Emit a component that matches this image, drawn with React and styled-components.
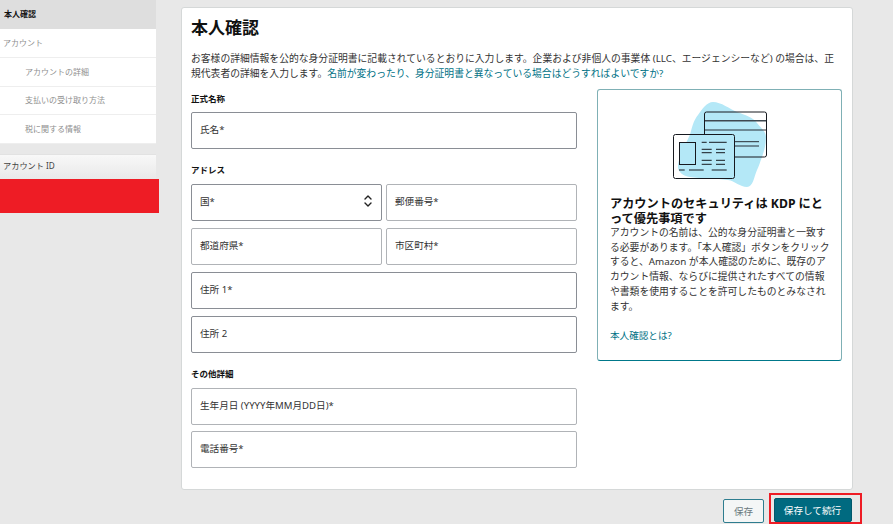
import React from "react";
import styled, { createGlobalStyle } from "styled-components";

const Global = createGlobalStyle`
  html, body { margin: 0; padding: 0; background: #e8e8e8; }
  body { font-family: "Noto Sans", "Noto Sans CJK JP", sans-serif; color: #16191f; overflow: hidden; }
  * { box-sizing: border-box; }
`;

const Page = styled.div`
  display: flex;
  width: 893px;
  height: 524px;
  overflow: hidden;
`;
const Sidebar = styled.aside`
  width: 159px;
  flex: none;
  display: flex;
  flex-direction: column;
`;
const NavHead = styled.div`
  width: 156px;
  height: 29px;
  padding: 0 0 2px 4px;
  display: flex;
  align-items: center;
  background: #dedede;
  font-size: 8px;
  font-weight: 700;
  color: #111;
`;
const NavItem = styled.div`
  width: 156px;
  height: 28.75px;
  display: flex;
  align-items: center;
  background: #fff;
  border-bottom: 1px solid #eeeeee;
  color: #8f8f8f;
  font-size: 8px;
  padding-left: ${p => (p.$sub ? "25px" : "3px")};
  padding-bottom: 1px;
`;
const AccountBar = styled.div`
  width: 156px;
  height: 25.5px;
  margin-top: 9.5px;
  padding-left: 3px;
  padding-bottom: 4px;
  display: flex;
  align-items: center;
  font-size: 8.2px;
  color: #444;
  border-top: 1px solid #e2e2e2;
  background: linear-gradient(#f8f8f8, #e9e9e9);
`;
const Redacted = styled.div`
  height: 34px;
  background: #ee1c25;
`;
const Main = styled.main`
  flex: 1;
  padding: 7px 40px 0 22px;
  display: flex;
  flex-direction: column;
`;
const Card = styled.section`
  height: 483px;
  flex: none;
  background: #fff;
  border: 1px solid #d5d8d8;
  border-radius: 3px;
  padding: 7px 9px 0;
`;
const Title = styled.h1`
  margin: 0;
  font-size: 17px;
  line-height: 26px;
  font-weight: 700;
  color: #0f1111;
`;
const Intro = styled.p`
  margin: 10px 0 0;
  font-size: 9.8px;
  line-height: 15px;
  color: #333;
  white-space: nowrap;
`;
const Link = styled.a`
  color: #007185;
  text-decoration: none;
`;
const Columns = styled.div`
  display: flex;
  gap: 20px;
  margin-top: 8px;
`;
const Form = styled.div`
  width: 386px;
  flex: none;
  display: flex;
  flex-direction: column;
  padding-top: 4px;
`;
const SectionLabel = styled.div`
  font-size: 8.5px;
  font-weight: 700;
  line-height: 12px;
  margin: ${p => p.$top || "0"} 0 ${p => p.$bottom || "8px"};
  color: #111;
`;
const Field = styled.div`
  height: 37px;
  flex: none;
  display: flex;
  align-items: center;
  justify-content: space-between;
  padding: 0 8px 3px;
  background: #fff;
  border: 1px solid ${p => (p.$dark ? "#8a8e95" : "#b0b3b7")};
  border-radius: 2px;
  font-size: 9.6px;
  color: #333;
`;
const HalfField = styled(Field)`
  flex: 1 1 0;
`;
const Stack = styled.div`
  display: flex;
  flex-direction: column;
  gap: ${p => p.$gap || "7px"};
`;
const Row = styled.div`
  display: flex;
  gap: 4px;
`;
const Panel = styled.aside`
  width: 245px;
  height: 272px;
  flex: none;
  padding: 12px 11px 0 12px;
  border: 1px solid #7fb0b5;
  border-bottom: 1.5px solid #00788a;
  border-radius: 3px;
  display: flex;
  flex-direction: column;
`;
const Art = styled.svg`
  display: block;
  align-self: center;
  flex: none;
`;
const PanelTitle = styled.h2`
  margin: 8px 0 0;
  font-size: 12.2px;
  line-height: 15px;
  font-weight: 700;
  color: #111;
`;
const PanelText = styled.p`
  margin: 0;
  font-size: 9.8px;
  line-height: 14.7px;
  color: #333;
`;
const PanelLink = styled(Link)`
  font-size: 9.6px;
  margin-top: 15px;
  line-height: 14px;
`;
const Footer = styled.div`
  display: flex;
  justify-content: flex-end;
  align-items: flex-start;
  gap: 5px;
  margin-right: -9px;
`;
const Button = styled.button`
  height: 24px;
  min-width: ${p => (p.$primary ? "78px" : "41px")};
  margin-top: ${p => (p.$primary ? "0" : "9px")};
  display: block;
  border-radius: 2px;
  border: 1px solid ${p => (p.$primary ? "#00586b" : "#2e7d8f")};
  background: ${p => (p.$primary ? "#006a80" : "#f4f6f6")};
  color: ${p => (p.$primary ? "#fff" : "#6b7a80")};
  font: 400 9.6px "Noto Sans CJK JP", sans-serif;
  padding: 0;
`;
const PrimaryWrap = styled.div`
  border: 2.5px solid #ee1c25;
  padding: 2.5px 8.5px 0 2.5px;
  margin-top: 3px;
  height: 31px;
  flex: none;
`;

const Chevrons = () => (
  <svg width="10" height="14" viewBox="0 0 10 14" fill="none" stroke="#222" strokeWidth="1.4" strokeLinecap="round" strokeLinejoin="round">
    <path d="M2 5 5 2l3 3M2 9l3 3 3-3" />
  </svg>
);

const CardsArt = () => (
  <Art width="94" height="86" viewBox="0 0 94 86">
    <path fill="#b4e8f7" d="M40 0C48 0 57 7 64 10C72 13 80 15 84 21C89 27 93 30 93 35C93 43 91 49 89 55C87 60 86 64 84 68C81 75 80 85 74 85C67 85 62 79 55 78C44 76 28 77 17 75C10 74 5 70 5 65C5 58 9 50 13 41C16 35 17 33 18 29C20 22 21 18 25 13C29 7 34 0 40 0Z" />
    <g fill="none" stroke="#16191f">
      <path d="M31.5 32V12a2 2 0 0 1 2-2h58a2 2 0 0 1 2 2v41a2 2 0 0 1-2 2H62" strokeWidth="1" />
      <path d="M32 18.7h61" strokeWidth="1.6" stroke="#3f4850" />
      <path d="M32 28h61" strokeWidth="0.9" />
      <path d="M62 39.7h24M62 44h24" strokeWidth="0.9" />
      <rect x="0.5" y="32.5" width="61" height="44" rx="2" strokeWidth="1" />
      <rect x="6.5" y="40.5" width="16" height="22" strokeWidth="1" fill="#b4e8f7" />
      <path d="M28.7 40.3h5M36 40.3h17.7M28.7 47.3h10M43 47.3h9M28.7 50.7h10M43 50.7h9M28.7 58.3h10M43 58.3h9M28.7 62.3h10M43 62.3h9M6 68h5.7M16 68h14.7M38.7 68h15" strokeWidth="1" />
    </g>
  </Art>
);

export default function App() {
  return (
    <Page>
      <Global />
      <Sidebar>
        <NavHead>本人確認</NavHead>
        <NavItem>アカウント</NavItem>
        <NavItem $sub>アカウントの詳細</NavItem>
        <NavItem $sub>支払いの受け取り方法</NavItem>
        <NavItem $sub>税に関する情報</NavItem>
        <AccountBar>アカウント ID</AccountBar>
        <Redacted />
      </Sidebar>
      <Main>
        <Card>
          <Title>本人確認</Title>
          <Intro>
            お客様の詳細情報を公的な身分証明書に記載されているとおりに入力します。企業および非個人の事業体 (LLC、エージェンシーなど) の場合は、正
            <br />
            規代表者の詳細を入力します。<Link>名前が変わったり、身分証明書と異なっている場合はどうすればよいですか?</Link>
          </Intro>
          <Columns>
            <Form>
              <SectionLabel $bottom="7px">正式名称</SectionLabel>
              <Field $dark>氏名*</Field>
              <SectionLabel $top="15px">アドレス</SectionLabel>
              <Stack>
                <Row>
                  <HalfField $dark>国*<Chevrons /></HalfField>
                  <HalfField>郵便番号*</HalfField>
                </Row>
                <Row>
                  <HalfField>都道府県*</HalfField>
                  <HalfField>市区町村*</HalfField>
                </Row>
                <Field $dark>住所 1*</Field>
                <Field $dark>住所 2</Field>
              </Stack>
              <SectionLabel $top="15px">その他詳細</SectionLabel>
              <Stack $gap="6px">
                <Field>生年月日 (YYYY年MM月DD日)*</Field>
                <Field>電話番号*</Field>
              </Stack>
            </Form>
            <Panel>
              <CardsArt />
              <PanelTitle>アカウントのセキュリティは KDP にとって優先事項です</PanelTitle>
              <PanelText>
                アカウントの名前は、公的な身分証明書と一致する必要があります。「本人確認」ボタンをクリックすると、Amazon が本人確認のために、既存のアカウント情報、ならびに提供されたすべての情報や書類を使用することを許可したものとみなされます。
              </PanelText>
              <PanelLink>本人確認とは?</PanelLink>
            </Panel>
          </Columns>
        </Card>
        <Footer>
          <Button>保存</Button>
          <PrimaryWrap><Button $primary>保存して続行</Button></PrimaryWrap>
        </Footer>
      </Main>
    </Page>
  );
}
